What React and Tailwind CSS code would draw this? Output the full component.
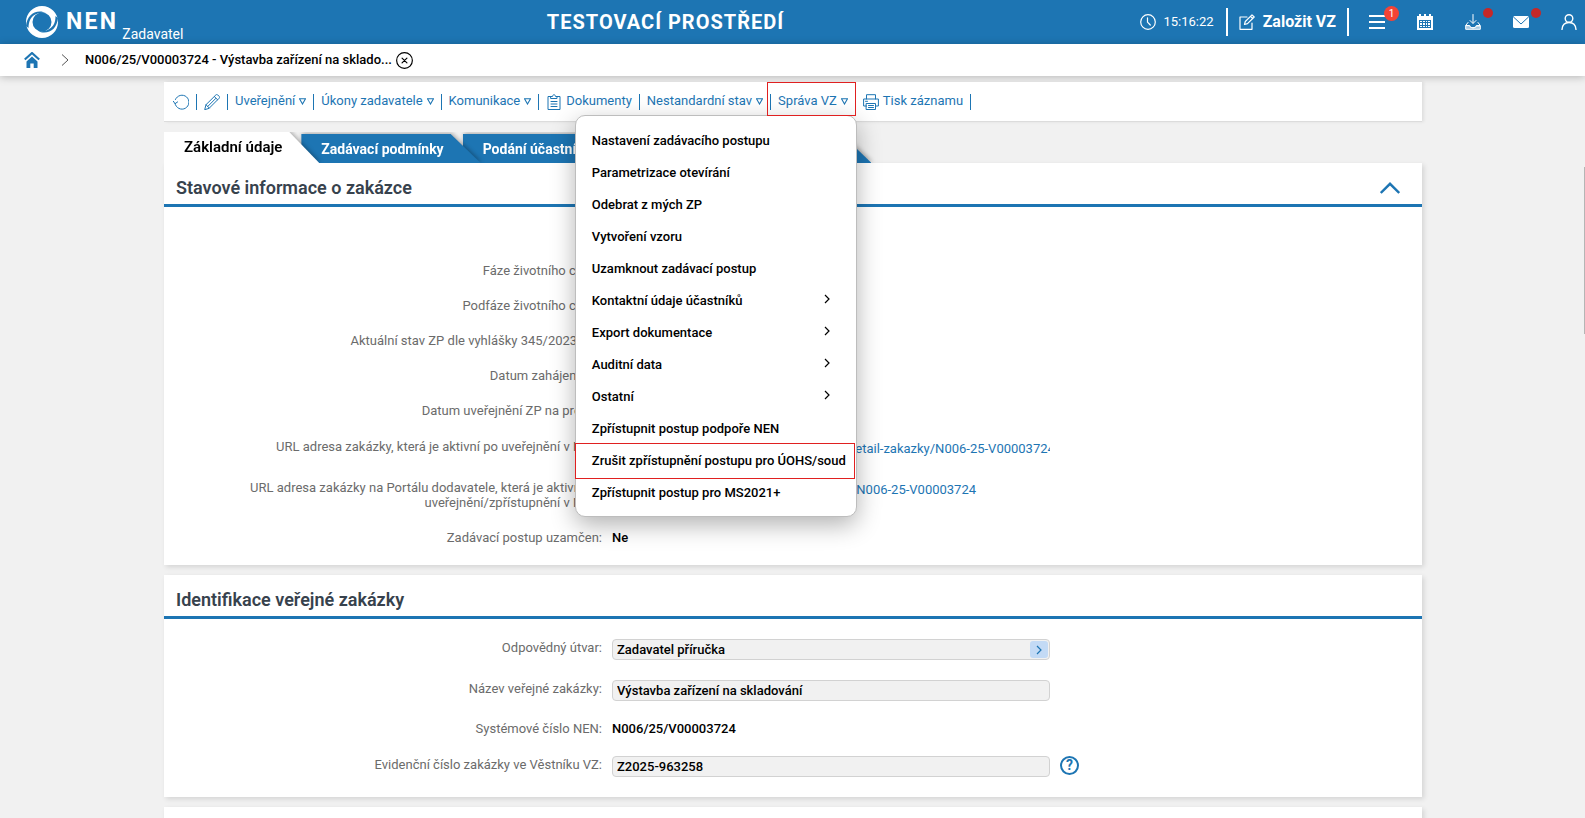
import React, { useState } from 'react';
import clsx from 'clsx';

const MENU_ITEMS = [
  { label: 'Nastavení zadávacího postupu' },
  { label: 'Parametrizace otevírání' },
  { label: 'Odebrat z mých ZP' },
  { label: 'Vytvoření vzoru' },
  { label: 'Uzamknout zadávací postup' },
  { label: 'Kontaktní údaje účastníků', sub: true },
  { label: 'Export dokumentace', sub: true },
  { label: 'Auditní data', sub: true },
  { label: 'Ostatní', sub: true },
  { label: 'Zpřístupnit postup podpoře NEN' },
  { label: 'Zrušit zpřístupnění postupu pro ÚOHS/soud', marked: true },
  { label: 'Zpřístupnit postup pro MS2021+' },
];

const TABS = [
  { label: 'Základní údaje', z: 'z-40' },
  { label: 'Zadávací podmínky', z: 'z-30' },
  { label: 'Podání účastníků', z: 'z-20' },
  { label: 'Zhodnocení zadávacího postupu', z: 'z-10' },
];

/* Icons */
const Icon = ({ size = 16, children, ...rest }) => (
  <svg
    width={size}
    height={size}
    viewBox="0 0 16 16"
    fill="none"
    stroke="currentColor"
    strokeWidth="1"
    strokeLinecap="round"
    strokeLinejoin="round"
    className="shrink-0"
    aria-hidden="true"
    {...rest}
  >
    {children}
  </svg>
);

const LogoMark = () => (
  <svg width="32" height="32" viewBox="0 0 32 32" className="shrink-0" aria-hidden="true">
    <path
      fill="#fff"
      fillRule="evenodd"
      d="M16 0a16 16 0 1 0 0 32a16 16 0 1 0 0-32zM16 6.500a9.500 9.500 0 1 1 0 19a9.500 9.500 0 1 1 0-19z"
    />
    <path d="M0 20C1 11 6 5.500 14 5.500c2 0 4 .5 6 1.800C13 5.500 6.500 9 4 14c-1 2-1.500 5-1.500 8z" fill="#1d75b3" />
    <path d="M32 12c-1 9-6 14.500-14 14.500c-2 0-4-.5-6-1.800c7 1.800 13.500-1.700 16-6.700c1-2 1.500-5 1.500-8z" fill="#1d75b3" />
  </svg>
);

const ClockIcon = () => (
  <Icon strokeWidth="1.200">
    <circle cx="8" cy="8" r="7.300" />
    <path d="M7.500 3.800v4.400l2.800 2.800" />
  </Icon>
);

const EditIcon = () => (
  <Icon strokeWidth="1.200">
    <path d="M8 3H1v12.300h12V9" />
    <path d="M5.500 10.500l.8-3 6.700-6.700 2.200 2.200-6.700 6.700zM11.500 2.300l2.200 2.200" />
  </Icon>
);

const BarsIcon = () => (
  <Icon strokeWidth="2" strokeLinecap="butt">
    <path d="M0 2h16M0 8h16M0 14h16" />
  </Icon>
);

const CalendarIcon = () => (
  <Icon stroke="none">
    <path fill="#fff" d="M0 2h2V0h2v2h3V0h2v2h3V0h2v2h2v14H0z" />
    <path fill="#1d75b3" d="M2 6h12v8H2z" />
    <path
      fill="#fff"
      d="M3 7h2v1H3zM6 7h2v1H6zM9 7h1v1H9zM11 7h2v1h-2zM3 9h2v2H3zM6 9h2v2H6zM9 9h1v2H9zM11 9h2v2h-2zM3 12h2v1H3zM6 12h2v1H6zM9 12h1v1H9zM11 12h2v1h-2z"
    />
  </Icon>
);

const DownloadIcon = () => (
  <Icon>
    <path d="M8 .5v8.500M5 6.500l3 3 3-3" />
    <path d="M3 8.500L.7 11.500h4c.5 3 6 3 6.600 0h4L13 8.500" />
    <path d="M.7 12v3.300h14.600V12c-1 .3-3 0-3.600 0c-1 2.500-6.500 2.500-7.400 0z" fill="#fff" fillOpacity=".6" />
  </Icon>
);

const MailIcon = () => (
  <Icon stroke="none">
    <rect y="2" width="16" height="12" rx="1.500" fill="#fff" />
    <path d="M.5 3l7.500 7 7.500-7" fill="none" stroke="#1d75b3" strokeWidth="1" />
  </Icon>
);

const UserIcon = () => (
  <Icon strokeWidth="1.400">
    <circle cx="8" cy="4.500" r="3.800" />
    <path d="M1 15.500c.3-4.500 3-7 7-7s6.700 2.500 7 7" />
  </Icon>
);

const HomeIcon = () => (
  <Icon stroke="none" className="shrink-0 text-[#1d75b3]">
    <path d="M.8 7.500L8 1l7.200 6.500" fill="none" stroke="currentColor" strokeWidth="2.200" strokeLinecap="butt" />
    <path d="M2.500 9.500L8 4.500l5.500 5V16h-3.800v-4.500H6.300V16H2.500z" fill="currentColor" />
  </Icon>
);

const RefreshIcon = () => (
  <Icon>
    <path d="M2 9.500a7 7 0 1 0 .4-4" />
    <path d="M.4 7.300L2 9.700l2.600-1.800" />
  </Icon>
);

const PencilIcon = () => (
  <Icon>
    <path d="M.8 15.300l1.200-4.600L11.800 1c.6-.6 1.400-.6 2 0l1.300 1.300c.6.6.6 1.400 0 2L5.300 14.100zM10.300 2.500l3.300 3.300M2 10.700l3.300 3.400M3.800 12.400l8-8" />
  </Icon>
);

const ClipboardIcon = () => (
  <Icon>
    <path d="M5 2.500H2v13h12v-13h-3" />
    <path d="M5 4.500h6v-2H9.500C9.500.2 6.500.2 6.500 2.500H5zM5 7.500h6M5 10h6M5 12.500h6" />
  </Icon>
);

const PrinterIcon = () => (
  <Icon>
    <path d="M3.500 5V.700h9V5M3.500 12H.6V5h14.800v7h-2.900M2.500 7.300h2" />
    <path d="M3.500 9.500h9v6h-9zM5.500 11.500h5M5.500 13.500h5" />
  </Icon>
);

const Caret = () => (
  <svg width="7" height="7" viewBox="0 0 7 7" fill="none" stroke="currentColor" className="shrink-0" aria-hidden="true">
    <path d="M.5 .8h6L3.500 6z" strokeWidth="1.100" />
  </svg>
);

const ChevronRight = ({ className }) => (
  <svg width="6" height="10" viewBox="0 0 6 10" fill="none" stroke="currentColor" strokeWidth="1.200" className={className} aria-hidden="true">
    <path d="M1 1l4 4-4 4" />
  </svg>
);

/* Header */
const HeaderButton = ({ label, badge, dot, children }) => (
  <button type="button" aria-label={label} className="relative flex size-4 items-center justify-center">
    {children}
    {badge && (
      <span className="absolute -top-2 -right-3.5 flex size-[15px] items-center justify-center rounded-full bg-[#f44336] text-[10px] leading-none">
        {badge}
      </span>
    )}
    {dot && <span className="absolute -top-1.5 -right-3 size-2.5 rounded-full bg-[#c62828]" />}
  </button>
);

const Header = () => (
  <header className="flex h-11 shrink-0 items-center justify-between bg-[#1d75b3] pr-2 pl-[26px] text-white">
    <div className="flex items-center">
      <LogoMark />
      <span className="ml-2 text-[23px] leading-7 font-bold tracking-widest">NEN</span>
      <span className="ml-1 pt-6 text-sm leading-5">Zadavatel</span>
    </div>
    <h1 className="pl-2 text-xl font-bold tracking-wider">TESTOVACÍ PROSTŘEDÍ</h1>
    <div className="flex items-center">
      <ClockIcon />
      <time className="ml-2 text-[13px]">15:16:22</time>
      <button type="button" className="mr-5 ml-3 flex h-7 items-center gap-2 border-x-2 border-white px-[11px] text-base font-bold">
        <EditIcon />
        Založit VZ
      </button>
      <nav className="flex gap-8">
        <HeaderButton label="Menu" badge="1">
          <BarsIcon />
        </HeaderButton>
        <HeaderButton label="Kalendář">
          <CalendarIcon />
        </HeaderButton>
        <HeaderButton label="Stažené soubory" dot>
          <DownloadIcon />
        </HeaderButton>
        <HeaderButton label="Zprávy" dot>
          <MailIcon />
        </HeaderButton>
        <HeaderButton label="Uživatel">
          <UserIcon />
        </HeaderButton>
      </nav>
    </div>
  </header>
);

const Breadcrumb = () => (
  <nav className="relative z-10 flex h-8 shrink-0 items-center bg-white pl-6 shadow-[0_1px_8px_rgba(0,0,0,0.25)]">
    <a href="#home" aria-label="Domů">
      <HomeIcon />
    </a>
    <svg width="8" height="12" viewBox="0 0 8 12" fill="none" stroke="#555" className="ml-[21px]" aria-hidden="true">
      <path d="M1 .5L7 6l-6 5.500" />
    </svg>
    <a href="#zakazka" className="ml-4 text-[13px] font-medium text-black">
      N006/25/V00003724 - Výstavba zařízení na sklado...
    </a>
    <button type="button" aria-label="Zavřít" className="ml-1">
      <Icon size={17} strokeWidth="1.100">
        <circle cx="8" cy="8" r="7.400" />
        <path d="M5.700 5.700l4.600 4.600M10.300 5.700l-4.600 4.600" />
      </Icon>
    </button>
  </nav>
);

/* Toolbar with the opened menu */
const ToolbarItem = ({ icon, label, text, caret, onClick, children }) => (
  <li className="relative flex h-full items-center">
    <button
      type="button"
      aria-label={label}
      onClick={onClick}
      className="flex h-4 items-center gap-1 border-r border-[#1d75b3] px-[7px] whitespace-nowrap"
    >
      {icon}
      {text && <span className="pb-0.5">{text}</span>}
      {caret && <Caret />}
    </button>
    {children}
  </li>
);

const DropdownMenu = () => (
  <ul className="absolute top-[33px] -right-px z-50 w-[282px] rounded-[10px] border border-[#bdbdbd] bg-white pt-[9px] pb-[7px] text-black shadow-[0_8px_24px_rgba(0,0,0,0.3)]">
    {MENU_ITEMS.map((item) => (
      <li key={item.label} className="relative">
        <button
          type="button"
          className="flex h-8 w-full items-center justify-between pr-[26px] pl-4 font-medium whitespace-nowrap"
        >
          {item.label}
          {item.sub && <ChevronRight className="mb-1" />}
        </button>
        {item.marked && <span className="pointer-events-none absolute -inset-y-0.5 right-px -left-px border border-[#e02020]" />}
      </li>
    ))}
  </ul>
);

const Toolbar = () => {
  const [open, setOpen] = useState(true);

  return (
    <ul className="relative z-50 flex h-10 items-center border-b border-[#dcdcdc] bg-white pl-0.5 text-[13px] text-[#1d75b3] shadow-[2px_0_3px_rgba(0,0,0,0.08)]">
      <ToolbarItem icon={<RefreshIcon />} label="Obnovit" />
      <ToolbarItem icon={<PencilIcon />} label="Upravit" />
      <ToolbarItem text="Uveřejnění" caret />
      <ToolbarItem text="Úkony zadavatele" caret />
      <ToolbarItem text="Komunikace" caret />
      <ToolbarItem icon={<ClipboardIcon />} text="Dokumenty" />
      <ToolbarItem text="Nestandardní stav" caret />
      <ToolbarItem text="Správa VZ" caret onClick={() => setOpen(!open)}>
        {open && <DropdownMenu />}
        <span className="pointer-events-none absolute top-0 right-0 -left-1 z-50 h-[34px] border border-[#e02020]" />
      </ToolbarItem>
      <ToolbarItem icon={<PrinterIcon />} text="Tisk záznamu" />
    </ul>
  );
};

const Tabs = () => {
  const [active, setActive] = useState('Základní údaje');

  return (
    <div role="tablist" className="mt-2.5 flex h-[31px] items-end overflow-hidden">
      {TABS.map((tab) => (
        <div
          key={tab.label}
          className={clsx('relative -mr-[18px] drop-shadow-[1px_-1px_2px_rgba(0,0,0,0.3)]', tab.z)}
        >
          <button
            type="button"
            role="tab"
            aria-selected={active === tab.label}
            onClick={() => setActive(tab.label)}
            className={clsx(
              'block pr-[37px] pl-5 whitespace-nowrap [clip-path:polygon(0_0,calc(100%-30px)_0,100%_100%,0_100%)]',
              active === tab.label
                ? 'h-[31px] bg-white text-[15px] font-semibold text-black'
                : 'h-[29px] bg-[#1d75b3] text-sm font-bold text-white'
            )}
          >
            {tab.label}
          </button>
        </div>
      ))}
    </div>
  );
};

/* Form panels */
const Panel = ({ title, collapsible, children }) => (
  <section className="mb-2.5 bg-white shadow-[2px_2px_5px_rgba(0,0,0,0.12)]">
    <div className="flex h-11 items-center justify-between border-b-3 border-[#1d75b3] pt-2 pr-[22px] pl-3">
      <h2 className="text-lg font-semibold text-[#37424d]">{title}</h2>
      {collapsible && (
        <button type="button" aria-label="Sbalit" className="text-[#1d75b3]">
          <svg width="20" height="12" viewBox="0 0 20 12" fill="none" stroke="currentColor" strokeWidth="2.400" aria-hidden="true">
            <path d="M.8 11L10 1.800 19.200 11" />
          </svg>
        </button>
      )}
    </div>
    <div className="py-2.5">{children}</div>
  </section>
);

const rowGrid = 'grid grid-cols-[438px_438px_1fr] gap-x-2.5 text-[13px] leading-[15px]';

const StaticRow = ({ label, value }) => (
  <dl className={clsx(rowGrid, 'h-[35px] items-center')}>
    <dt className="text-right text-[#6b6b6b]">{label}</dt>
    <dd className="font-medium text-black">{value}</dd>
  </dl>
);

const LinkRow = ({ label, href }) => (
  <dl className={clsx(rowGrid, 'py-2.5')}>
    <dt className="pt-px pl-20 text-right text-[#6b6b6b]">{label}</dt>
    <dd className="overflow-hidden whitespace-nowrap">
      <a href={href} className="leading-[21px] text-[#1d75b3]">
        {href}
      </a>
    </dd>
  </dl>
);

const InputRow = ({ id, label, value, detail, help }) => (
  <div className={clsx(rowGrid, 'py-2.5')}>
    <label htmlFor={id} className="pt-px text-right text-[#6b6b6b]">
      {label}
    </label>
    <div className="relative">
      <input
        id={id}
        defaultValue={value}
        readOnly
        className="block h-[21px] w-full rounded border border-[#d2d2d2] bg-[#f1f1f1] px-1 font-medium text-black outline-none"
      />
      {detail && (
        <button
          type="button"
          aria-label="Detail"
          className="absolute top-0.5 right-0.5 flex h-[17px] w-[18px] items-center justify-center rounded-[3px] bg-[#c3daf5] text-[#1d75b3]"
        >
          <ChevronRight />
        </button>
      )}
    </div>
    {help && (
      <button type="button" aria-label="Nápověda" className="size-[19px] rounded-full border-2 border-[#1d75b3] text-sm leading-[15px] font-bold text-[#1d75b3]">
        ?
      </button>
    )}
  </div>
);

const App = () => {
  return (
    <div className="relative flex h-screen flex-col overflow-hidden bg-[#f1f1f1] font-['Roboto','Liberation_Sans',sans-serif]">
      <Header />
      <Breadcrumb />

      <main className="flex-1 overflow-hidden pt-1.5 pr-[163px] pl-[164px]">
        <Toolbar />
        <Tabs />

        <Panel title="Stavové informace o zakázce" collapsible>
          <div className="pt-9">
            <StaticRow label="Fáze životního cyklu:" />
            <StaticRow label="Podfáze životního cyklu:" />
            <StaticRow label="Aktuální stav ZP dle vyhlášky 345/2023 Sb.:" />
            <StaticRow label="Datum zahájení ZP:" />
            <StaticRow label="Datum uveřejnění ZP na profilu:" />
            <LinkRow
              label="URL adresa zakázky, která je aktivní po uveřejnění v NEN:"
              href="https://nen-ref.nipez.cz/verejne-zakazky/detail-zakazky/N006-25-V00003724"
            />
            <LinkRow
              label="URL adresa zakázky na Portálu dodavatele, která je aktivní po uveřejnění/zpřístupnění v NEN:"
              href="https://nenref.nipez.cz/cs/detail/zakazka/N006-25-V00003724"
            />
            <StaticRow label="Zadávací postup uzamčen:" value="Ne" />
          </div>
        </Panel>

        <Panel title="Identifikace veřejné zakázky">
          <InputRow id="utvar" label="Odpovědný útvar:" value="Zadavatel příručka" detail />
          <InputRow id="nazev" label="Název veřejné zakázky:" value="Výstavba zařízení na skladování" />
          <StaticRow label="Systémové číslo NEN:" value="N006/25/V00003724" />
          <InputRow id="evidencni" label="Evidenční číslo zakázky ve Věstníku VZ:" value="Z2025-963258" help />
        </Panel>

        <Panel />
      </main>

      {/* Scrollbar thumb */}
      <div className="absolute top-[167px] right-0 h-[167px] w-px bg-[#b5b5b5]" />
    </div>
  );
};

export default App;
